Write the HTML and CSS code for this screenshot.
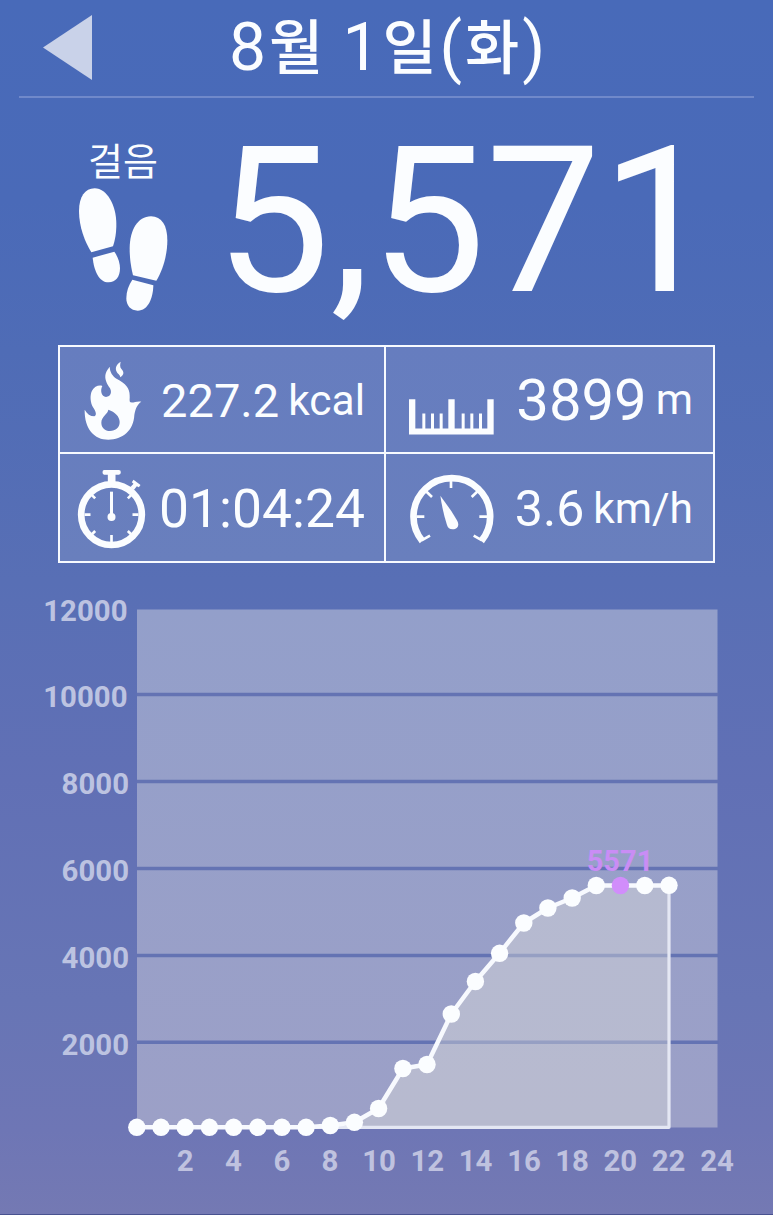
FILE: index.html
```html
<!DOCTYPE html>
<html lang="ko">
<head>
<meta charset="utf-8">
<title>8월 1일(화)</title>
<link rel="stylesheet" href="styles.css">
</head>
<body>
<div class="screen">
  <header class="header">
    <svg class="back" viewBox="0 0 49 65"><path d="M0 32.5 49 0V65Z"/></svg>
    <h1 class="title">8<span class="hangul">월</span> 1<span class="hangul">일</span>(<span class="hangul">화</span>)</h1>
  </header>

  <section class="steps">
    <div class="steps-label">
      <span class="steps-text">걸음</span>
      <svg class="feet" viewBox="55 170 270 375">
        <path d="M95 366C76 335 58 290 58 242C58 200 76 174 105 174C142 174 170 225 170 282C170 310 166 330 160 348Z"/>
        <path d="M99 382L164 364C174 378 181 397 181 414C181 440 168 456 147 456C117 456 103 420 99 382Z"/>
        <path d="M220 435C214 410 210 385 210 355C210 300 234 258 274 258C306 258 323 285 323 330C323 375 309 420 290 451Z"/>
        <path d="M218 448L281 465C280 505 265 541 234 541C213 541 200 526 200 504C200 483 207 464 218 448Z"/>
      </svg>
    </div>
    <div class="steps-count">5,571</div>
  </section>

  <section class="stats">
    <div class="cell cell-kcal">
      <svg class="icon flame" viewBox="100 60 180 240">
        <path fill-rule="evenodd" d="M105 209C112 222 122 229 134 229C142 226 139 215 130 202C122 188 120 166 127 152C134 140 147 134 158 138C151 151 155 170 169 171C184 170 187 156 181 145C171 130 164 116 168 101C171 91 176 86 180 80C181 97 188 108 202 117C228 130 240 145 240 166C241 176 238 184 242 187C252 189 262 182 275 185C262 193 257 208 254 225C252 272 218 299 176 299C134 299 104 267 105 209ZM176 209C175 222 155 229 155 248C155 263 166 273 181 273C198 273 210 262 210 246C210 230 196 215 176 209Z"/>
        <path d="M213 65C201 72 195 84 201 95C204 102 211 103 212 112C224 104 223 96 216 88C210 81 211 74 213 65Z"/>
      </svg>
      <span class="value">227.2</span><span class="unit">kcal</span>
    </div>
    <div class="cell cell-dist">
      <svg class="icon ruler" viewBox="88 176 255 107">
        <path d="M88 176H107V264H128V219H137V264H154V219H163V264H180V219H189V264H206V176H225V264H246V219H255V264H272V219H281V264H298V219H307V264H323V176H342V282H88Z"/>
      </svg>
      <span class="value">3899</span><span class="unit">m</span>
    </div>
    <div class="cell cell-time">
      <svg class="icon watch" viewBox="82 384 206 240">
        <path d="M163 387H207Q213 387 213 394Q213 401 207 401H197V424H174V401H163Q158 401 158 394Q158 387 163 387Z"/>
        <path d="M251 416L272 432L267 439L261 436L252 447L242 438L251 428L246 424Z"/>
        <circle class="ring" cx="185" cy="521" r="91"/>
        <path class="tick" d="M185 582V604M104 521H122M248 521H266M124 460L136 472M246 460L234 472M124 582L136 570M246 582L234 570"/>
        <path class="hand" d="M185 452V521"/>
        <circle cx="185" cy="528" r="12"/>
      </svg>
      <span class="value">01:04:24</span>
    </div>
    <div class="cell cell-speed">
      <svg class="icon gauge" viewBox="86 398 258 210">
        <path class="ring" d="M126 599A115 115 0 1 1 303 599"/>
        <path class="tick" d="M212 415V440M108 526H132M297 526H322M137 450L155 467M292 450L274 467M124 597L149 583M305 597L280 583"/>
        <path d="M180 463C195 483 218 515 231 539C238 553 231 564 217 564C207 564 203 560 200 551C191 523 184 492 180 463Z"/>
      </svg>
      <span class="value">3.6</span><span class="unit">km/h</span>
    </div>
  </section>

  <svg class="chart" viewBox="0 564 773 650">
    <defs>
      <linearGradient id="plot" x1="0" y1="0" x2="0" y2="1">
        <stop offset="0" stop-color="#939fca"/>
        <stop offset="1" stop-color="#9ca0c7"/>
      </linearGradient>
    </defs>
    <rect x="137" y="609.5" width="580.5" height="518" fill="url(#plot)"/>
    <path class="grid" d="M137 694.5H718.5M137 781.5H718.5M137 868.5H718.5M137 955.5H718.5M137 1042.2H718.5"/>
    <g class="axis axis-y">
      <text x="127.5" y="620.7">12000</text>
      <text x="127.5" y="707.2">10000</text>
      <text x="129" y="794">8000</text>
      <text x="129" y="881">6000</text>
      <text x="129" y="968">4000</text>
      <text x="129" y="1055">2000</text>
    </g>
    <g class="axis axis-x">
      <text x="185.3" y="1171">2</text>
      <text x="233.5" y="1171">4</text>
      <text x="282" y="1171">6</text>
      <text x="330" y="1171">8</text>
      <text x="379" y="1171">10</text>
      <text x="427.3" y="1171">12</text>
      <text x="475.6" y="1171">14</text>
      <text x="524" y="1171">16</text>
      <text x="572" y="1171">18</text>
      <text x="620.3" y="1171">20</text>
      <text x="668.5" y="1171">22</text>
      <text x="717" y="1171">24</text>
    </g>
    <path class="area" d="M137 1127.3H306.3L330.5 1125.5 354.5 1122.3 378.5 1108.5 403 1068.5 427 1064.5 451.3 1014 475.3 981.5 499.5 953.3 523.8 923 547.8 908 572.2 898 596.3 885.5H669V1127.3Z"/>
    <path class="edge" d="M306 1127.3H669V885.5"/>
    <path class="line" d="M137 1127.3H306.3L330.5 1125.5 354.5 1122.3 378.5 1108.5 403 1068.5 427 1064.5 451.3 1014 475.3 981.5 499.5 953.3 523.8 923 547.8 908 572.2 898 596.3 885.5H669"/>
    <text class="peak" x="620" y="871">5571</text>
    <g class="dots">
      <circle cx="136.8" cy="1127.3" r="8.7"/><circle cx="161" cy="1127.3" r="8.7"/><circle cx="185.2" cy="1127.3" r="8.7"/><circle cx="209.4" cy="1127.3" r="8.7"/><circle cx="233.6" cy="1127.3" r="8.7"/><circle cx="257.8" cy="1127.3" r="8.7"/><circle cx="281.9" cy="1127.3" r="8.7"/><circle cx="306.1" cy="1127.3" r="8.7"/>
      <circle cx="330.3" cy="1125.5" r="8.7"/><circle cx="354.4" cy="1122.3" r="8.7"/><circle cx="378.6" cy="1108.5" r="8.7"/><circle cx="402.9" cy="1068.5" r="8.7"/><circle cx="427" cy="1064.5" r="8.7"/><circle cx="451.3" cy="1014" r="8.7"/><circle cx="475.4" cy="981.5" r="8.7"/><circle cx="499.6" cy="953.3" r="8.7"/>
      <circle cx="523.8" cy="923" r="8.7"/><circle cx="547.9" cy="908" r="8.7"/><circle cx="572.2" cy="898" r="8.7"/><circle cx="596.3" cy="885.5" r="8.7"/><circle class="current" cx="620.4" cy="885.5" r="8.7"/><circle cx="644.8" cy="885.5" r="8.7"/><circle cx="669" cy="885.3" r="8.7"/>
    </g>
  </svg>
</div>
</body>
</html>
```

FILE: styles.css
```css
* { box-sizing: border-box; }

body {
  margin: 0;
  font-family: Roboto, "Noto Sans CJK KR", sans-serif;
  color: #fbfdff;
}

.screen {
  width: 773px;
  height: 1215px;
  overflow: hidden;
  display: flex;
  flex-direction: column;
  border-bottom: 1px solid #48528f;
  background: linear-gradient(180deg, #486ab9 0, #4a6ab8 200px, #4f6cb6 350px, #586fb5 580px, #6170b5 780px, #6775b5 1000px, #6e76b5 1130px, #7479b3 1215px);
}

svg { display: block; flex: none; fill: #fbfdff; }

.header {
  display: flex;
  flex: none;
  align-items: flex-start;
  height: 98px;
  margin: 0 19px;
  padding-left: 24px;
  border-bottom: 2px solid #7089ca;
}

.back { width: 49px; height: 65px; margin-top: 15px; fill: #c9d2e9; }

.title {
  margin: 0 0 0 137px;
  font-size: 66px;
  font-weight: 400;
  line-height: 96px;
  white-space: nowrap;
}

.hangul {
  display: inline-block;
  width: 60px;
  font-size: 59px;
  font-weight: 500;
  line-height: 60px;
  text-align: center;
  vertical-align: 1px;
}

.steps { display: flex; flex: none; height: 247px; padding-left: 78px; }

.steps-label { width: 90px; padding-top: 39px; }

.steps-text { display: block; padding-left: 10px; font-size: 38px; line-height: 50px; white-space: nowrap; }

.feet { width: 90px; height: 125px; }

.steps-count {
  margin-left: 47px;
  padding-top: 21px;
  font-size: 205px;
  line-height: 205px;
  white-space: nowrap;
}

.stats {
  display: grid;
  flex: none;
  grid-template-columns: 324px 327px;
  grid-template-rows: 105px 107px;
  gap: 2px;
  width: 657px;
  height: 218px;
  margin-left: 58px;
  border: 2px solid #f7faff;
  background: linear-gradient(#f7faff, #f7faff) 324px 0 / 2px 100% no-repeat,
    linear-gradient(#f7faff, #f7faff) 0 105px / 100% 2px no-repeat,
    linear-gradient(#667dbf, #697fbd);
}

.cell { display: flex; align-items: center; white-space: nowrap; }

.value { margin-left: auto; }

.unit { font-size: 42.5px; }

.cell-kcal { padding: 1px 19px 0 23px; }
.cell-kcal .value { font-size: 47px; }
.cell-kcal .unit { margin-left: 9px; }

.cell-dist { padding: 0 20px 0 22px; }
.cell-dist .value { font-size: 58px; }
.cell-dist .unit { margin-left: 9px; }

.cell-time { padding: 2px 19px 0 17px; }
.cell-time .value { font-size: 53.4px; }

.cell-speed { padding: 2px 20px 0 23px; }
.cell-speed .value { font-size: 50px; }
.cell-speed .unit { margin-left: 9px; }

.flame { width: 60px; height: 80px; }
.ruler { width: 85px; height: 36px; margin: 34px 0 0 1px; }
.watch { width: 69px; height: 80px; }
.gauge { width: 86px; height: 70px; }

.ring { fill: none; stroke: #fbfdff; stroke-width: 20; }
.tick { fill: none; stroke: #fbfdff; stroke-width: 8; }
.hand { stroke: #fbfdff; stroke-width: 9; }

.chart { width: 773px; height: 650px; margin-top: 1px; }

.grid { fill: none; stroke: #6473b3; stroke-width: 3.4; }
.axis { font-size: 29.4px; font-weight: 700; fill: #bcc3e1; }
.axis-y { text-anchor: end; }
.axis-x { text-anchor: middle; fill: #bfc2df; }
.area { fill: rgba(225, 225, 220, 0.4); }
.edge { fill: none; stroke: #e4e7f3; stroke-width: 3.2; stroke-linejoin: round; }
.line { fill: none; stroke: #f7f9fe; stroke-width: 4.5; stroke-linejoin: round; }
.peak { font-size: 29px; font-weight: 700; fill: #c98df5; text-anchor: middle; }
.dots .current { fill: #d18dfb; }
```
